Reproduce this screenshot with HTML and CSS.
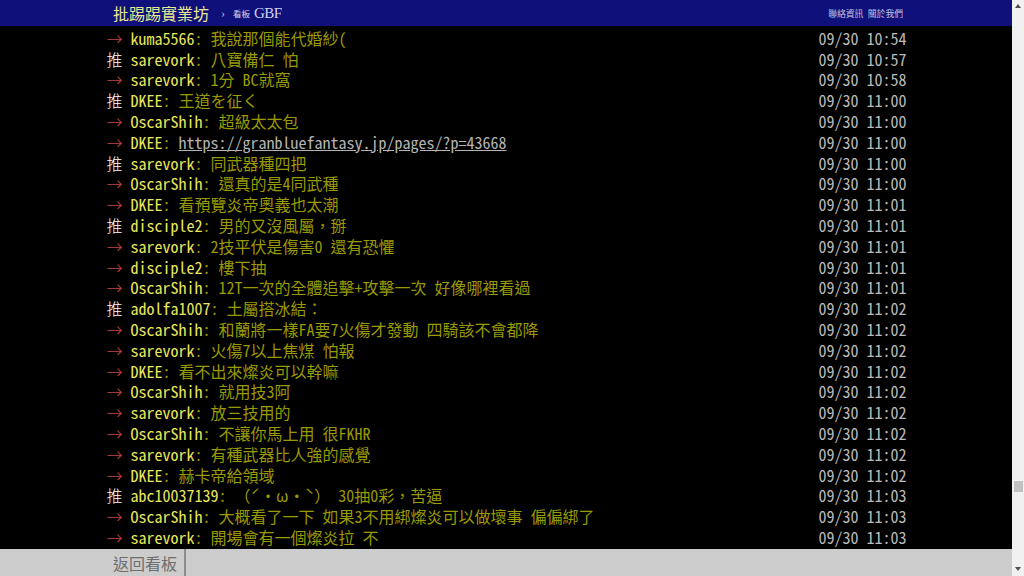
FILE: index.html
```html
<!DOCTYPE html>
<html lang="zh-Hant">
<head>
  <meta charset="UTF-8">
  <meta name="viewport" content="width=device-width, initial-scale=1.0">
  <link rel="stylesheet" href="styles.css">
</head>
<body>

<div class="page">
  <!-- 上方列 -->
  <div class="topbar">
    <div class="wrap topbar-inner">
      <span class="logo">批踢踢實業坊</span>
      <span class="crumb">›</span>
      <span class="board-label">看板</span>
      <span class="board">GBF</span>
      <span class="links">聯絡資訊 &nbsp;關於我們</span>
    </div>
  </div>

  <!-- 推文 -->
  <div class="screen">
    <div class="wrap">
      <div class="push"><span class="tag arrow">→</span><span class="uid">kuma5566</span><span class="msg">: 我說那個能代婚紗(</span><span class="time">09/30 10:54</span></div>
      <div class="push"><span class="tag">推</span><span class="uid">sarevork</span><span class="msg">: 八寶備仁 怕</span><span class="time">09/30 10:57</span></div>
      <div class="push"><span class="tag arrow">→</span><span class="uid">sarevork</span><span class="msg">: 1分 BC就窩</span><span class="time">09/30 10:58</span></div>
      <div class="push"><span class="tag">推</span><span class="uid">DKEE</span><span class="msg">: 王道を征く</span><span class="time">09/30 11:00</span></div>
      <div class="push"><span class="tag arrow">→</span><span class="uid">OscarShih</span><span class="msg">: 超級太太包</span><span class="time">09/30 11:00</span></div>
      <div class="push"><span class="tag arrow">→</span><span class="uid">DKEE</span><span class="msg">: <a href="#">https://granbluefantasy.jp/pages/?p=43668</a></span><span class="time">09/30 11:00</span></div>
      <div class="push"><span class="tag">推</span><span class="uid">sarevork</span><span class="msg">: 同武器種四把</span><span class="time">09/30 11:00</span></div>
      <div class="push"><span class="tag arrow">→</span><span class="uid">OscarShih</span><span class="msg">: 還真的是4同武種</span><span class="time">09/30 11:00</span></div>
      <div class="push"><span class="tag arrow">→</span><span class="uid">DKEE</span><span class="msg">: 看預覽炎帝奧義也太潮</span><span class="time">09/30 11:01</span></div>
      <div class="push"><span class="tag">推</span><span class="uid">disciple2</span><span class="msg">: 男的又沒風屬，掰</span><span class="time">09/30 11:01</span></div>
      <div class="push"><span class="tag arrow">→</span><span class="uid">sarevork</span><span class="msg">: 2技平伏是傷害0 還有恐懼</span><span class="time">09/30 11:01</span></div>
      <div class="push"><span class="tag arrow">→</span><span class="uid">disciple2</span><span class="msg">: 樓下抽</span><span class="time">09/30 11:01</span></div>
      <div class="push"><span class="tag arrow">→</span><span class="uid">OscarShih</span><span class="msg">: 12T一次的全體追擊+攻擊一次 好像哪裡看過</span><span class="time">09/30 11:01</span></div>
      <div class="push"><span class="tag">推</span><span class="uid">adolfa1007</span><span class="msg">: 土屬搭冰結：</span><span class="time">09/30 11:02</span></div>
      <div class="push"><span class="tag arrow">→</span><span class="uid">OscarShih</span><span class="msg">: 和蘭將一樣FA要7火傷才發動 四騎該不會都降</span><span class="time">09/30 11:02</span></div>
      <div class="push"><span class="tag arrow">→</span><span class="uid">sarevork</span><span class="msg">: 火傷7以上焦煤 怕報</span><span class="time">09/30 11:02</span></div>
      <div class="push"><span class="tag arrow">→</span><span class="uid">DKEE</span><span class="msg">: 看不出來燦炎可以幹嘛</span><span class="time">09/30 11:02</span></div>
      <div class="push"><span class="tag arrow">→</span><span class="uid">OscarShih</span><span class="msg">: 就用技3阿</span><span class="time">09/30 11:02</span></div>
      <div class="push"><span class="tag arrow">→</span><span class="uid">sarevork</span><span class="msg">: 放三技用的</span><span class="time">09/30 11:02</span></div>
      <div class="push"><span class="tag arrow">→</span><span class="uid">OscarShih</span><span class="msg">: 不讓你馬上用 很FKHR</span><span class="time">09/30 11:02</span></div>
      <div class="push"><span class="tag arrow">→</span><span class="uid">sarevork</span><span class="msg">: 有種武器比人強的感覺</span><span class="time">09/30 11:02</span></div>
      <div class="push"><span class="tag arrow">→</span><span class="uid">DKEE</span><span class="msg">: 赫卡帝給領域</span><span class="time">09/30 11:02</span></div>
      <div class="push"><span class="tag">推</span><span class="uid">abc10037139</span><span class="msg">: （ˊ・ω・ˋ） 30抽0彩，苦逼</span><span class="time">09/30 11:03</span></div>
      <div class="push"><span class="tag arrow">→</span><span class="uid">OscarShih</span><span class="msg">: 大概看了一下 如果3不用綁燦炎可以做壞事 偏偏綁了</span><span class="time">09/30 11:03</span></div>
      <div class="push"><span class="tag arrow">→</span><span class="uid">sarevork</span><span class="msg">: 開場會有一個燦炎拉 不</span><span class="time">09/30 11:03</span></div>
    </div>
  </div>

  <!-- 下方列 -->
  <div class="actionbar">
    <div class="wrap actionbar-inner">
      <a class="btn" href="#">返回看板</a>
    </div>
  </div>
</div>

<!-- 捲軸 -->
<div class="scrollbar">
  <span class="sb-arrow up"></span>
  <span class="sb-thumb"></span>
  <span class="sb-arrow down"></span>
</div>

</body>
</html>
```

FILE: styles.css
```css
html, body {
  margin: 0;
  height: 100%;
  overflow: hidden;
}

body {
  display: flex;
  background: #000;
  font-family: "Liberation Serif", "Noto Sans CJK TC", serif;
}

.page {
  flex: 1;
  display: flex;
  flex-direction: column;
  height: 576px;
}

.wrap {
  width: 800px;
  margin: 0 auto;
}

/* 上方列 */
.topbar {
  height: 26px;
  background: #10107a;
  flex-shrink: 0;
}

.topbar-inner {
  display: flex;
  align-items: center;
  height: 100%;
}

.logo {
  padding-left: 7px;
  font-size: 16px;
  color: #e8e890;
}

.crumb {
  margin-left: 12px;
  font-size: 12px;
  color: #b8b8d8;
}

.board-label {
  margin-left: 8px;
  font-size: 8.5px;
  color: #d8d8f0;
}

.board {
  margin-left: 4px;
  font-size: 15px;
  letter-spacing: -0.6px;
  color: #d4d4ee;
}

.links {
  margin-left: auto;
  margin-right: 3px;
  font-size: 8.8px;
  color: #c0c0e0;
}

/* 推文 */
.screen {
  flex: 1;
  overflow: hidden;
  padding-top: 1.8px;
}

.screen .wrap {
  padding-left: 1px;
}

.push {
  display: flex;
  height: 20.8px;
  line-height: 20.8px;
  font-size: 16px;
  font-family: "Noto Sans Mono CJK TC", "Liberation Serif", "Noto Sans CJK TC", monospace;
  white-space: pre;
}

.tag {
  width: 24px;
  font-family: "Noto Sans CJK TC", sans-serif;
  font-weight: 300;
  color: #fff;
}

.tag.arrow {
  color: #c04444;
}

.uid {
  color: #e8e85a;
}

.msg {
  color: #999900;
}

.msg a {
  color: #b4b4b4;
}

.time {
  margin-left: auto;
  color: #bbb;
}

/* 下方列 */
.actionbar {
  height: 27px;
  background: #cccccc;
  flex-shrink: 0;
}

.actionbar-inner {
  display: flex;
  height: 100%;
}

.btn {
  display: flex;
  align-items: center;
  padding: 0 7px 0 7px;
  border-right: 2px solid #8c8c8c;
  font-size: 16px;
  color: #6e6e6e;
  text-decoration: none;
}

/* 捲軸 */
.scrollbar {
  width: 12px;
  height: 576px;
  background: #f1f1f1;
  display: flex;
  flex-direction: column;
  align-items: center;
}

.sb-arrow {
  width: 0;
  height: 0;
  border-left: 3px solid transparent;
  border-right: 3px solid transparent;
}

.sb-arrow.up {
  margin-top: 4px;
  border-bottom: 4px solid #505050;
}

.sb-thumb {
  width: 9px;
  height: 11px;
  margin-top: 473px;
  background: #c1c1c1;
}

.sb-arrow.down {
  margin-top: auto;
  margin-bottom: 5px;
  border-top: 4px solid #505050;
}
```
